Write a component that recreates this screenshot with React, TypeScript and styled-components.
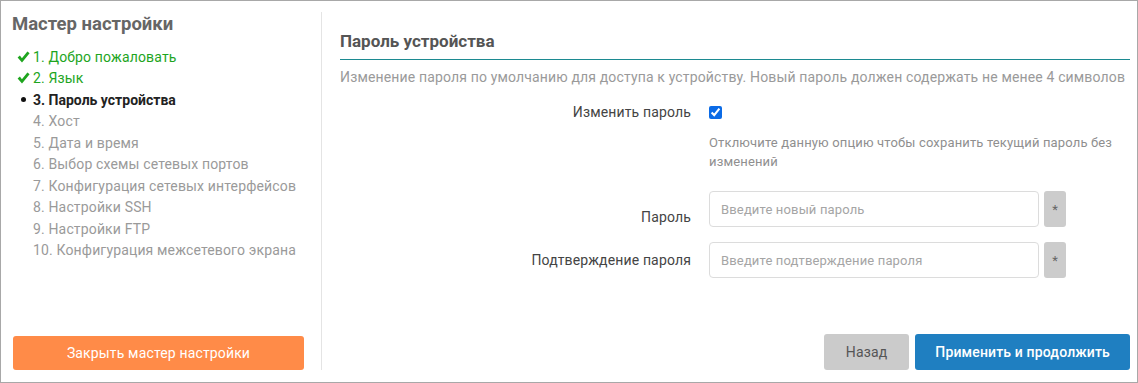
import styled, { createGlobalStyle } from 'styled-components'

const GlobalStyle = createGlobalStyle`
  html, body {
    margin: 0;
    padding: 0;
    background: #ffffff;
  }
  body {
    font-family: Roboto, "Noto Sans", "Liberation Sans", sans-serif;
    letter-spacing: 0.15px;
  }
`

const Frame = styled.div`
  box-sizing: border-box;
  width: 1138px;
  height: 383px;
  border: 1px solid #a8a8a8;
  display: flex;
  background: #fff;
`

const Sidebar = styled.aside`
  box-sizing: border-box;
  width: 320px;
  padding: 12px 17px 12px 11px;
  display: flex;
  flex-direction: column;
`

const Divider = styled.div`
  width: 1px;
  margin: 11px 0 12px;
  background-color: #e4e4e4;
`

const WizardTitle = styled.h2`
  margin: 0 0 11px;
  font-size: 18.5px;
  line-height: 22px;
  font-weight: bold;
  letter-spacing: 0;
  color: #666;
`

const Steps = styled.ul`
  list-style: none;
  margin: 0;
  padding: 0;
  flex: 1;
`

type StepState = 'done' | 'current' | 'todo'

const Step = styled.li<{ $state: StepState }>`
  display: flex;
  align-items: center;
  height: 21.5px;
  font-size: 14px;
  color: ${p => (p.$state === 'done' ? '#1ea51e' : p.$state === 'current' ? '#222' : '#9a9a9a')};
  font-weight: ${p => (p.$state === 'current' ? 'bold' : 'normal')};
  letter-spacing: ${p => (p.$state === 'current' ? '0' : '0.15px')};
`

const Marker = styled.span`
  width: 21px;
  display: inline-flex;
  justify-content: center;
  align-items: center;
  margin-left: 1px;
  margin-right: -1px;
`

const Dot = styled.span`
  width: 5px;
  height: 5px;
  border-radius: 50%;
  background-color: #111;
`

const CheckIcon = () => (
  <svg width="13" height="12" viewBox="0 0 13 12" aria-hidden="true">
    <path d="M0.6 6.4 L2.9 4.5 L4.9 7.2 L10.4 0.4 L12.6 2.2 L5 11.6 Z" fill="#1ea51e" />
  </svg>
)

const CloseButton = styled.button`
  height: 34px;
  width: 291px;
  margin-left: 1px;
  border: none;
  border-radius: 3px;
  background-color: #ff8b48;
  color: #fff;
  font-family: inherit;
  font-size: 14px;
  letter-spacing: 0.15px;
  cursor: pointer;
`

const Main = styled.main`
  flex: 1;
  box-sizing: border-box;
  padding: 29px 7px 12px 18px;
  display: flex;
  flex-direction: column;
`

const SectionTitle = styled.h3`
  margin: 0;
  padding-bottom: 6px;
  font-size: 17px;
  line-height: 23px;
  font-weight: bold;
  letter-spacing: 0;
  color: #555;
  border-bottom: 1px solid #1c8a91;
`

const Description = styled.p`
  margin: 8px 0 0;
  font-size: 14px;
  line-height: 18px;
  color: #9a9a9a;
  white-space: nowrap;
`

const Form = styled.div`
  display: grid;
  grid-template-columns: 351px 1fr;
  column-gap: 18px;
  align-items: center;
  margin-top: 16px;
  flex: 1;
  align-content: start;
`

const Label = styled.label`
  text-align: right;
  font-size: 14px;
  color: #444;
`

const CheckWrap = styled.div`
  display: flex;
  align-items: center;
  height: 20px;
`

const Check = styled.input`
  margin: 0;
  width: 13px;
  height: 13px;
  accent-color: #0b6be6;
`

const Hint = styled.p`
  grid-column: 2;
  margin: 11px 0 20px;
  font-size: 13px;
  line-height: 19px;
  color: #8f8f8f;
  max-width: 410px;
`

const InputGroup = styled.div<{ $last?: boolean }>`
  display: flex;
  gap: 5px;
  margin-bottom: ${p => (p.$last ? '0' : '15px')};
`

const TextInput = styled.input`
  box-sizing: border-box;
  width: 330px;
  height: 36px;
  border: 1px solid #dcdcdc;
  border-radius: 4px;
  padding: 0 11px;
  font-family: inherit;
  font-size: 13px;
  letter-spacing: 0.15px;
  color: #333;
  &::placeholder {
    color: #a5a5a5;
  }
`

const Addon = styled.span`
  width: 22px;
  height: 36px;
  border-radius: 3px;
  background-color: #cccccc;
  color: #666;
  font-size: 13px;
  display: flex;
  align-items: center;
  justify-content: center;
`

const Actions = styled.div`
  display: flex;
  justify-content: flex-end;
  gap: 6px;
`

const ActionButton = styled.button<{ $primary?: boolean }>`
  height: 36px;
  padding: 0 ${p => (p.$primary ? '20px' : '22px')};
  border: none;
  border-radius: 3px;
  font-family: inherit;
  font-size: 14px;
  letter-spacing: 0.15px;
  font-weight: ${p => (p.$primary ? 500 : 'normal')};
  background-color: ${p => (p.$primary ? '#1f7fc1' : '#cbcbcb')};
  color: ${p => (p.$primary ? '#fff' : '#555')};
  cursor: pointer;
`

const steps: { title: string; state: StepState }[] = [
  { title: '1. Добро пожаловать', state: 'done' },
  { title: '2. Язык', state: 'done' },
  { title: '3. Пароль устройства', state: 'current' },
  { title: '4. Хост', state: 'todo' },
  { title: '5. Дата и время', state: 'todo' },
  { title: '6. Выбор схемы сетевых портов', state: 'todo' },
  { title: '7. Конфигурация сетевых интерфейсов', state: 'todo' },
  { title: '8. Настройки SSH', state: 'todo' },
  { title: '9. Настройки FTP', state: 'todo' },
  { title: '10. Конфигурация межсетевого экрана', state: 'todo' },
]

const App = () => {
  return (
    <Frame>
      <GlobalStyle />
      <Sidebar>
        <WizardTitle>Мастер настройки</WizardTitle>
        <Steps>
          {steps.map(s => (
            <Step key={s.title} $state={s.state}>
              <Marker>
                {s.state === 'done' && <CheckIcon />}
                {s.state === 'current' && <Dot />}
              </Marker>
              {s.title}
            </Step>
          ))}
        </Steps>
        <CloseButton>Закрыть мастер настройки</CloseButton>
      </Sidebar>
      <Divider />
      <Main>
        <SectionTitle>Пароль устройства</SectionTitle>
        <Description>
          Изменение пароля по умолчанию для доступа к устройству. Новый пароль должен содержать не менее 4 символов
        </Description>
        <Form>
          <Label htmlFor="change">Изменить пароль</Label>
          <CheckWrap>
            <Check id="change" type="checkbox" defaultChecked />
          </CheckWrap>
          <Hint>Отключите данную опцию чтобы сохранить текущий пароль без изменений</Hint>
          <Label htmlFor="pwd">Пароль</Label>
          <InputGroup>
            <TextInput id="pwd" type="password" placeholder="Введите новый пароль" />
            <Addon>*</Addon>
          </InputGroup>
          <Label htmlFor="pwd2">Подтверждение пароля</Label>
          <InputGroup $last>
            <TextInput id="pwd2" type="password" placeholder="Введите подтверждение пароля" />
            <Addon>*</Addon>
          </InputGroup>
        </Form>
        <Actions>
          <ActionButton>Назад</ActionButton>
          <ActionButton $primary>Применить и продолжить</ActionButton>
        </Actions>
      </Main>
    </Frame>
  )
}

export default App
